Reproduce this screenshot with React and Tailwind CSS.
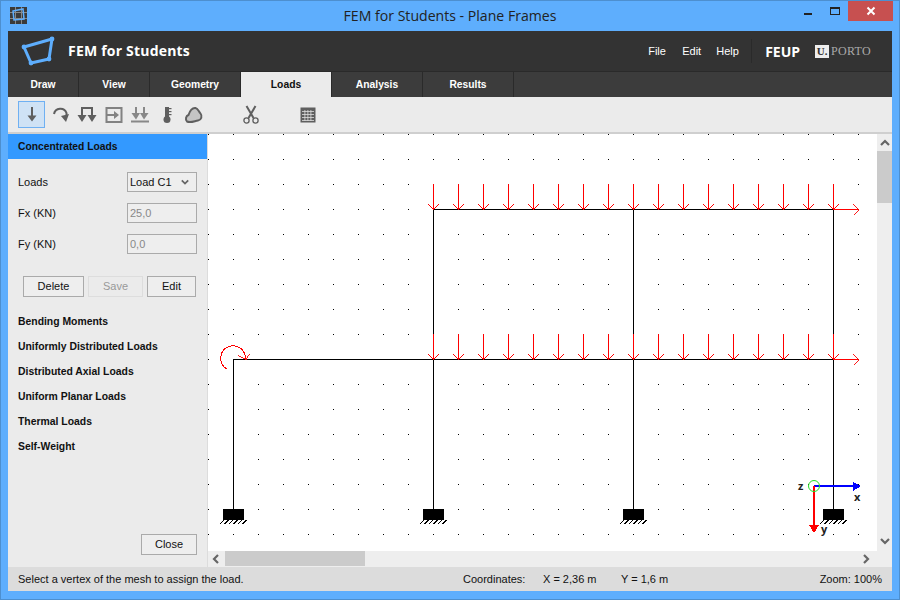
import React from "react";

const range = (a, b, s) => { const r = []; for (let i = a; i <= b; i += s) r.push(i); return r; };

function Canvas() {
  const xs = range(208, 858, 25);
  const ys = range(134, 534, 25);
  const arrows = range(433, 833, 25);
  const head = (x, y) => `${x - 5.5},${y - 5.5} ${x},${y} ${x + 5.5},${y - 5.5}`;
  return (
    <svg className="block" width="669" height="417" viewBox="208 134 669 417" shapeRendering="crispEdges">
      {xs.map((x) => ys.map((y) => <rect key={x + "-" + y} x={x} y={y} width="1" height="1" fill="#000" />))}
      {/* frame */}
      <rect x="233" y="359" width="600" height="1" fill="#000" />
      <rect x="433" y="209" width="400" height="1" fill="#000" />
      <rect x="233" y="359" width="1" height="150" fill="#000" />
      <rect x="433" y="209" width="1" height="300" fill="#000" />
      <rect x="633" y="209" width="1" height="300" fill="#000" />
      <rect x="833" y="209" width="1" height="300" fill="#000" />
      {/* supports */}
      {[233, 433, 633, 833].map((x) => (
        <g key={x}>
          <rect x={x - 10} y="509" width="21" height="11" fill="#000" />
          {[0, 1, 2, 3, 4, 5].map((i) => (
            <path key={i} d={`M${x - 13 + i * 4.5} 524 L${x - 9 + i * 4.5} 520`} stroke="#000" strokeWidth="1" fill="none" />
          ))}
        </g>
      ))}
      {/* loads */}
      {[209, 359].map((y) => (
        <g key={y}>
          {arrows.map((x) => (
            <g key={x}>
              <rect x={x} y={y - 25} width="1" height="25" fill="#f00" />
              <polyline points={head(x + 0.5, y + 0.5)} fill="none" stroke="#f00" strokeWidth="1" />
            </g>
          ))}
          <rect x="833" y={y} width="25" height="1" fill="#f00" />
          <polyline points={`852.5,${y - 5} 858,${y + 0.5} 852.5,${y + 6}`} fill="none" stroke="#f00" strokeWidth="0.9" />
        </g>
      ))}
      {/* moment */}
      <path d="M227.5 369.5 A12.5 12.5 0 1 1 245.5 359.5" fill="none" stroke="#f00" strokeWidth="1" />
      <polyline points="238,355.5 245.5,359.5 249,353.5" fill="none" stroke="#f00" strokeWidth="0.9" />
      {/* axes */}
      <rect x="814" y="485" width="40" height="2" fill="#00f" />
      <polygon points="853,482 861,486 853,491" fill="#00f" />
      <rect x="813" y="486" width="2" height="40" fill="#f00" />
      <polygon points="809,525 819,525 814,533" fill="#f00" />
      <circle cx="814" cy="486" r="5.5" fill="none" stroke="#22dd22" strokeWidth="1" shapeRendering="auto" />
      <g fontFamily="'Open Sans', sans-serif" fontWeight="700" fontSize="11" fill="#222" shapeRendering="auto">
        <text x="798" y="490">z</text>
        <text x="854" y="501">x</text>
        <text x="821" y="533">y</text>
      </g>
    </svg>
  );
}

const Chevron = ({ d, className }) => (
  <svg className={className} width="10" height="10" viewBox="0 0 10 10">
    <path d={d} fill="none" stroke="#666" strokeWidth="2.2" />
  </svg>
);

const ToolIcon = ({ children, opacity }) => (
  <svg width="20" height="20" viewBox="0 0 20 20" style={opacity ? { opacity } : undefined}>{children}</svg>
);

function Toolbar() {
  const c = "#5f5f5f";
  return (
    <div className="h-[35px] bg-[#ebebeb] flex items-center pl-[10px] shrink-0">
      <div className="w-[27px] h-[27px] bg-[#cfe2f5] border border-[#6fb0f2] flex items-center justify-center">
        <ToolIcon>
          <rect x="9" y="2" width="2" height="12" fill={c} />
          <polygon points="5.5,10.5 14.5,10.5 10,16.5" fill={c} />
        </ToolIcon>
      </div>
      <div className="ml-[4px] w-[23px] flex justify-center">
        <ToolIcon>
          <path d="M3 9 A6.5 6.5 0 0 1 15.5 8 L15.5 12" fill="none" stroke={c} strokeWidth="2" />
          <polygon points="10,11 18,9 15,17" fill={c} />
        </ToolIcon>
      </div>
      <div className="ml-[3px] w-[23px] flex justify-center">
        <ToolIcon>
          <path d="M5 11 V3 H15 V11" fill="none" stroke={c} strokeWidth="2" />
          <polygon points="0.5,10 9.5,10 5,17" fill={c} />
          <polygon points="10.5,10 19.5,10 15,17" fill={c} />
        </ToolIcon>
      </div>
      <div className="ml-[4px] w-[23px] flex justify-center">
        <ToolIcon opacity="0.75">
          <rect x="2.5" y="3" width="15" height="14" fill="none" stroke={c} strokeWidth="2" />
          <rect x="3" y="9" width="8" height="2" fill={c} />
          <polygon points="10,6 15,10 10,14" fill={c} />
        </ToolIcon>
      </div>
      <div className="ml-[3px] w-[23px] flex justify-center">
        <ToolIcon opacity="0.7">
          <rect x="5" y="2" width="2" height="8" fill={c} />
          <rect x="13" y="2" width="2" height="8" fill={c} />
          <polygon points="1.5,8 10,8 6,14.5" fill={c} />
          <polygon points="10,8 18.5,8 14,14.5" fill={c} />
          <rect x="1" y="15.5" width="18" height="2" fill={c} />
        </ToolIcon>
      </div>
      <div className="ml-[4px] w-[23px] flex justify-center">
        <ToolIcon>
          <rect x="8" y="2" width="4" height="12" fill={c} />
          <circle cx="10" cy="14.5" r="3.5" fill={c} />
          <rect x="12" y="3" width="2.5" height="1.2" fill={c} />
          <rect x="12" y="6" width="2.5" height="1.2" fill={c} />
          <rect x="12" y="9" width="2.5" height="1.2" fill={c} />
        </ToolIcon>
      </div>
      <div className="ml-[4px] w-[23px] flex justify-center">
        <ToolIcon>
          <path d="M3 16.5 C1 14 2 11 4.5 10 C5.5 7 8 2.5 11.5 3 C14 3.5 14.5 6 16.5 8.5 C18.5 11 17.5 15 14 15.5 C11 16 9 17 6 17 C5 17 4 17 3 16.5 Z" fill="#c4c4c4" stroke={c} strokeWidth="2" />
        </ToolIcon>
      </div>
      <div className="ml-[34px] w-[23px] flex justify-center">
        <ToolIcon>
          <path d="M5.5 1 L12.5 13 M14.5 1 L7.5 13" fill="none" stroke={c} strokeWidth="2" />
          <circle cx="5.5" cy="15.5" r="2.6" fill="none" stroke={c} strokeWidth="1.3" />
          <circle cx="14.5" cy="15.5" r="2.6" fill="none" stroke={c} strokeWidth="1.3" />
        </ToolIcon>
      </div>
      <div className="ml-[34px] w-[23px] flex justify-center">
        <ToolIcon>
          <rect x="2.5" y="2.5" width="15" height="15" fill={c} />
          {[6, 9, 12, 15].map((y) => <rect key={"h" + y} x="4" y={y} width="12" height="0.8" fill="#ddd" />)}
          {[6.5, 9.5, 12.5].map((x) => <rect key={"v" + x} x={x} y="5" width="0.8" height="11" fill="#ddd" />)}
        </ToolIcon>
      </div>
    </div>
  );
}

const Field = ({ label, children }) => (
  <div className="flex items-center justify-between h-[20px] pl-[10px] pr-[10px]">
    <span>{label}</span>
    {children}
  </div>
);

const Btn = ({ className, children }) => (
  <div className={"h-[21px] border flex items-center justify-center " + className}>{children}</div>
);

const tabClass = "h-full flex items-center justify-center font-bold text-[10.3px] border-r";

export default function App() {
  return (
    <div className="w-[900px] h-[600px] bg-[#5eaefd] border border-[#4d8fcf] flex flex-col overflow-hidden text-[#111] text-[11px]" style={{ fontFamily: "'Liberation Sans', sans-serif" }}>
      {/* title bar */}
      <div className="h-[30px] shrink-0 relative flex items-center justify-center">
        <svg className="absolute left-[9px] top-[6px]" width="17" height="17" viewBox="0 0 17 17" shapeRendering="crispEdges">
          <rect width="17" height="17" fill="#3a3a3a" />
          <path d="M0 5 H17 M0 11 H17 M5 0 V17 M11 0 V17" stroke="#888" strokeWidth="1" />
          <path d="M3 4 L13 2 L14 12 L4 13 Z" fill="none" stroke="#5eaefd" strokeWidth="1.5" shapeRendering="auto" />
        </svg>
        <span className="text-[14.1px] text-[#222] mb-[1px]" style={{ fontFamily: "'Open Sans', sans-serif" }}>FEM for Students - Plane Frames</span>
        <div className="absolute left-[803px] top-[12px] w-[8px] h-[2px] bg-[#222]" />
        <div className="absolute left-[829px] top-[6px] w-[10px] h-[8px] border border-[#222] border-t-2" />
        <div className="absolute right-[6px] top-0 w-[45px] h-[20px] bg-[#c75050] flex items-center justify-center">
          <svg width="10" height="10" viewBox="0 0 10 10"><path d="M1.5 1.5 L8.5 8.5 M8.5 1.5 L1.5 8.5" stroke="#fff" strokeWidth="2" /></svg>
        </div>
      </div>

      {/* content */}
      <div className="mx-[7px] w-[884px] flex flex-col h-[560px] shrink-0">
        {/* header */}
        <div className="h-[41px] bg-[#333333] border-b border-[#2a2a2a] flex items-center shrink-0 text-white">
          <svg className="ml-[13px]" width="34" height="30" viewBox="0 0 34 30">
            <path d="M3 11 L31 3 L28 23 L10 27 Z" fill="none" stroke="#5eaefd" strokeWidth="3" strokeLinejoin="round" />
            {[[3, 11], [31, 3], [28, 23], [10, 27]].map(([x, y]) => <circle key={x} cx={x} cy={y} r="2.4" fill="#5eaefd" />)}
          </svg>
          <span className="ml-[13px] font-bold text-[14px] tracking-[0.2px] mb-[1px]" style={{ fontFamily: "'Open Sans', sans-serif" }}>FEM for Students</span>
          <div className="ml-auto flex items-center text-[11px]">
            <span className="w-[34px] mt-[1px]">File</span>
            <span className="w-[34px] mt-[1px]">Edit</span>
            <span className="w-[35px] mt-[1px]">Help</span>
            <div className="w-px h-[24px] bg-[#2a2a2a]" />
            <span className="ml-[13px] font-bold text-[14px]" style={{ fontFamily: "'Open Sans', sans-serif" }}>FEUP</span>
            <div className="ml-[15px] w-[14px] h-[13px] bg-[#eee] flex items-center justify-center text-[#333] font-bold text-[11px] leading-none" style={{ fontFamily: "'Liberation Serif', serif" }}>U.</div>
            <span className="ml-[2px] mr-[21px] text-[12px] text-[#aaa] tracking-[0.3px]" style={{ fontFamily: "'Liberation Serif', serif" }}>PORTO</span>
          </div>
        </div>
        {/* tabs */}
        <div className="h-[25px] bg-[#3c3c3c] flex shrink-0 text-white">
          <div className={tabClass + " w-[71px] border-[#2a2a2a]"}>Draw</div>
          <div className={tabClass + " w-[71px] border-[#2a2a2a]"}>View</div>
          <div className={tabClass + " w-[91px] border-[#2a2a2a]"}>Geometry</div>
          <div className={tabClass + " w-[91px] bg-[#ebebeb] text-[#111] border-[#2a2a2a]"}>Loads</div>
          <div className={tabClass + " w-[91px] border-[#2a2a2a]"}>Analysis</div>
          <div className={tabClass + " w-[91px] border-[#2a2a2a]"}>Results</div>
        </div>
        <Toolbar />
        <div className="h-[2px] bg-[#cfcfcf] shrink-0" />
        {/* main */}
        <div className="flex flex-1 min-h-0">
          <div className="w-[200px] bg-[#ebebeb] border-r border-[#dcdcdc] flex flex-col shrink-0">
            <div className="h-[25px] bg-[#3399ff] flex items-center pl-[10px] font-bold text-[10.3px] shrink-0">Concentrated Loads</div>
            <div className="flex flex-col gap-[11px] mt-[13px]">
              <Field label="Loads">
                <div className="w-[70px] h-[20px] border border-[#aaa] bg-[#eee] flex items-center justify-between pl-[2px] pr-[7px]">
                  <span>Load C1</span>
                  <Chevron className="w-[8px] h-[8px]" d="M1 3 L5 7 L9 3" />
                </div>
              </Field>
              <Field label="Fx (KN)">
                <div className="w-[70px] h-[20px] border border-[#aaa] bg-[#eee] flex items-center pl-[2px] text-[#888]">25,0</div>
              </Field>
              <Field label="Fy (KN)">
                <div className="w-[70px] h-[20px] border border-[#aaa] bg-[#eee] flex items-center pl-[2px] text-[#888]">0,0</div>
              </Field>
            </div>
            <div className="flex gap-[4px] ml-[15px] mt-[22px]">
              <Btn className="w-[61px] border-[#aaa] bg-[#eee]">Delete</Btn>
              <Btn className="w-[55px] border-[#ddd] text-[#999]">Save</Btn>
              <Btn className="w-[49px] border-[#aaa] bg-[#eee]">Edit</Btn>
            </div>
            <div className="flex flex-col ml-[10px] mt-[12px] font-bold text-[10.4px]">
              {["Bending Moments", "Uniformly Distributed Loads", "Distributed Axial Loads", "Uniform Planar Loads", "Thermal Loads", "Self-Weight"].map((t) => (
                <div key={t} className="h-[25px] flex items-center">{t}</div>
              ))}
            </div>
            <div className="mt-auto mb-[12px] ml-auto mr-[10px]">
              <Btn className="w-[56px] border-[#aaa] bg-[#eee]">Close</Btn>
            </div>
          </div>
          <div className="flex-1 flex flex-col min-w-0">
            <div className="flex flex-1 min-h-0">
              <div className="w-[669px] bg-white overflow-hidden"><Canvas /></div>
              <div className="flex-1 bg-[#eeeeee] flex flex-col items-center">
                <Chevron className="mt-[4px]" d="M1 7 L5 3 L9 7" />
                <div className="mt-[3px] w-[15px] h-[52px] bg-[#cbcbcb] -ml-px" />
                <Chevron className="mt-auto mb-[5px]" d="M1 3 L5 7 L9 3" />
              </div>
            </div>
            <div className="h-[16px] bg-[#eeeeee] flex items-center shrink-0">
              <Chevron className="ml-[3px]" d="M7 1 L3 5 L7 9" />
              <div className="ml-[4px] w-[140px] h-[15px] self-start bg-[#cbcbcb]" />
              <Chevron className="ml-auto mr-[21px]" d="M3 1 L7 5 L3 9" />
            </div>
          </div>
        </div>
        {/* status */}
        <div className="h-[24px] bg-[#dcdcdc] flex items-center pl-[10px] shrink-0">
          <span className="w-[445px]">Select a vertex of the mesh to assign the load.</span>
          <span className="w-[80px]">Coordinates:</span>
          <span className="w-[78px]">X = 2,36 m</span>
          <span>Y = 1,6 m</span>
          <span className="ml-auto mr-[10px]">Zoom: 100%</span>
        </div>
      </div>
    </div>
  );
}
